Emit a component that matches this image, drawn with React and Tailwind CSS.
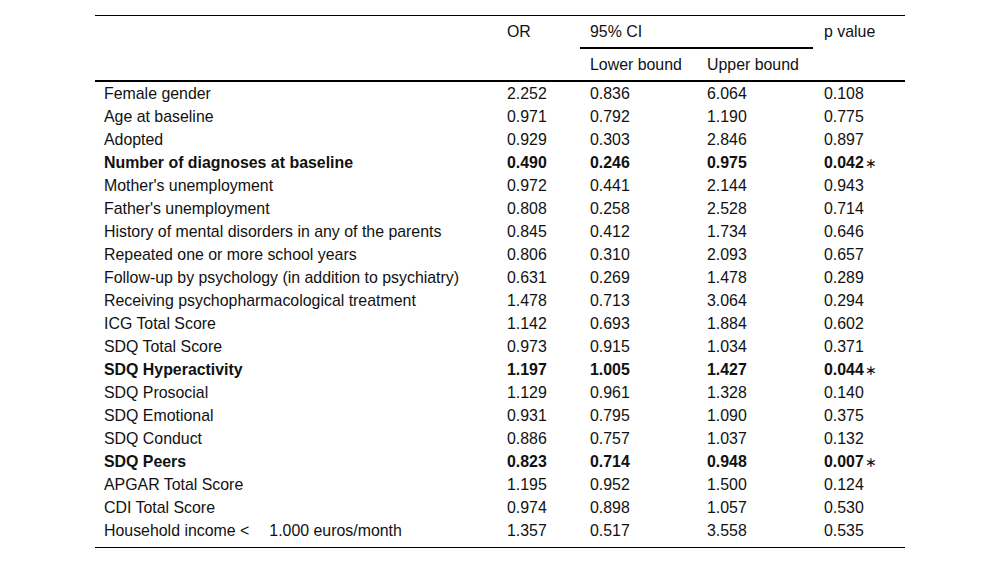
import React from 'react'

const rows = [
  ['Female gender', '2.252', '0.836', '6.064', '0.108'],
  ['Age at baseline', '0.971', '0.792', '1.190', '0.775'],
  ['Adopted', '0.929', '0.303', '2.846', '0.897'],
  ['Number of diagnoses at baseline', '0.490', '0.246', '0.975', '0.042', true],
  ["Mother's unemployment", '0.972', '0.441', '2.144', '0.943'],
  ["Father's unemployment", '0.808', '0.258', '2.528', '0.714'],
  ['History of mental disorders in any of the parents', '0.845', '0.412', '1.734', '0.646'],
  ['Repeated one or more school years', '0.806', '0.310', '2.093', '0.657'],
  ['Follow-up by psychology (in addition to psychiatry)', '0.631', '0.269', '1.478', '0.289'],
  ['Receiving psychopharmacological treatment', '1.478', '0.713', '3.064', '0.294'],
  ['ICG Total Score', '1.142', '0.693', '1.884', '0.602'],
  ['SDQ Total Score', '0.973', '0.915', '1.034', '0.371'],
  ['SDQ Hyperactivity', '1.197', '1.005', '1.427', '0.044', true],
  ['SDQ Prosocial', '1.129', '0.961', '1.328', '0.140'],
  ['SDQ Emotional', '0.931', '0.795', '1.090', '0.375'],
  ['SDQ Conduct', '0.886', '0.757', '1.037', '0.132'],
  ['SDQ Peers', '0.823', '0.714', '0.948', '0.007', true],
  ['APGAR Total Score', '1.195', '0.952', '1.500', '0.124'],
  ['CDI Total Score', '0.974', '0.898', '1.057', '0.530'],
  ['Household income', '1.357', '0.517', '3.558', '0.535'],
]

const cols = 'grid grid-cols-[402px_83px_117px_117px_91px]'

export default function App() {
  return (
    <div className="min-h-[563px] bg-white pt-[15px] text-[15.9px] text-[#111] font-['Liberation_Sans',Arial,sans-serif]">
      <div className="ml-[95px] w-[810px] border-t border-black">
        {/* header */}
        <div className={`${cols} grid-rows-[33px_31px] border-b-2 border-black leading-[23px]`}>
          <div className="row-span-2" />
          <div className="row-span-2 pl-[10px] pt-[4px]">OR</div>
          <div className="col-span-2 mr-[1px] border-b-2 border-black pl-[10px] pt-[4px]">95% CI</div>
          <div className="row-span-2 pl-[10px] pt-[4px]">p value</div>
          <div className="pl-[10px] pt-[4px]">Lower bound</div>
          <div className="pl-[10px] pt-[4px]">Upper bound</div>
        </div>

        {/* body */}
        <div className="border-b border-black pb-[5px] leading-[23px]">
          {rows.map(([label, or, lo, hi, p, bold]) => (
            <div key={label} className={`${cols} h-[23px] ${bold ? 'font-bold' : ''}`}>
              <div className="pl-[9px] whitespace-nowrap">
                {label === 'Household income' ? (
                  <>Household income &lt;<span className="ml-[20px]">1.000 euros/month</span></>
                ) : label}
              </div>
              <div className="pl-[10px]">{or}</div>
              <div className="pl-[10px]">{lo}</div>
              <div className="pl-[10px]">{hi}</div>
              <div className="pl-[10px]">
                {p}
                {bold && <span className="ml-[1px] text-[14px] font-normal">∗</span>}
              </div>
            </div>
          ))}
        </div>
      </div>
    </div>
  )
}
